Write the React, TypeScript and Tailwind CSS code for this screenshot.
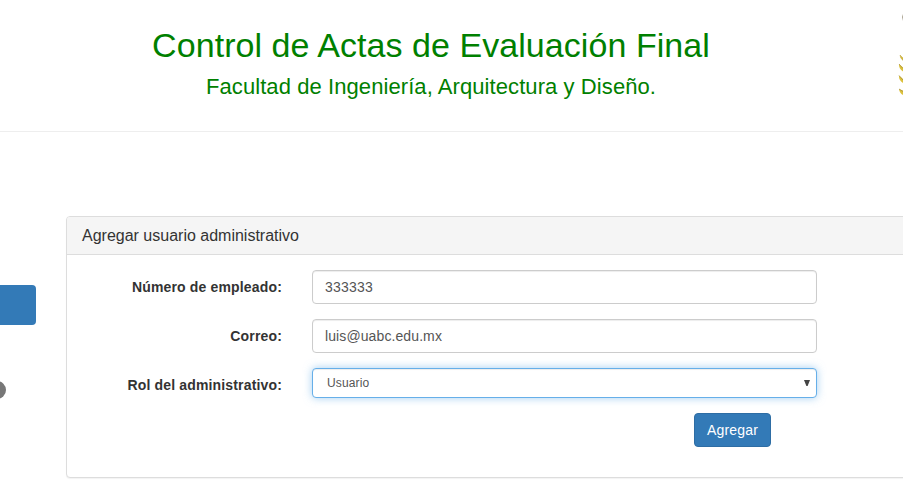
import React from 'react';

const inputBase =
  'block w-[505px] rounded-[4px] border bg-white text-[#555]';

function Field({ label, children }: { label: string; children: React.ReactNode }) {
  return (
    <div className="flex items-start">
      <label className="w-[215px] pt-[7px] text-right text-[14px] leading-[20px] font-bold text-[#333] tracking-[0.16px]">
        {label}
      </label>
      <div className="ml-[30px]">{children}</div>
    </div>
  );
}

function Crest() {
  return (
    <svg className="block h-[131px] w-[6px]" viewBox="0 0 6 131" fill="none">
      <path d="M6 14Q4.4 17 6 21Z" fill="#8a8068" />
      <path d="M3 55Q3 58 6 60.5V58Z" fill="#d8bc38" stroke="#bda33c" strokeWidth="0.5" />
      {[64, 75.5].map((y) => (
        <g key={y}>
          <path d={`M2 ${y}Q1.6 ${y + 4.5} 6 ${y + 7.5}V${y + 3.5}Z`} fill="#dcc13c" />
          <path d={`M2 ${y}L6 ${y + 4.5}`} stroke="#a48d3c" strokeWidth="0.7" />
        </g>
      ))}
      <path d="M2 89Q2.5 93 6 95V90.5Z" fill="#dcc13c" />
      <path d="M2 89L6 91.5" stroke="#a48d3c" strokeWidth="0.7" />
    </svg>
  );
}

export default function App() {
  return (
    <div className="h-[503px] w-[903px] overflow-hidden bg-white font-['Liberation_Sans',Arial,sans-serif] text-[#333]">
      <header className="flex h-[132px] border-b border-[#eee]">
        <div className="w-[897px] pr-[35px] pt-[25px] text-center text-[#008000]">
          <h1 className="whitespace-nowrap text-[34px] leading-[40px] tracking-[0.06px]">Control de Actas de Evaluación Final</h1>
          <h2 className="mt-[9px] whitespace-nowrap text-[22px] leading-[25px] tracking-[0.08px]">
            Facultad de Ingeniería, Arquitectura y Diseño.
          </h2>
        </div>
        <Crest />
      </header>

      <div className="flex">
        <aside className="w-[66px] shrink-0 pt-[153px]">
          <div className="h-[40px] w-[36px] rounded-r-[4px] bg-[#337ab7]" />
          <div className="mt-[56px] h-[18px] w-[6px] overflow-hidden">
            <div className="-ml-[18px] h-[18px] w-[24px] rounded-[10px] bg-[#777]" />
          </div>
        </aside>

        <main className="mt-[84px] h-[262px] w-[860px] shrink-0 rounded-[4px] border border-[#ddd] bg-white shadow-[0_1px_1px_rgba(0,0,0,0.05)]">
          <div className="h-[38px] rounded-t-[3px] border-b border-[#ddd] bg-[#f5f5f5] px-[15px] pt-[10px]">
            <h3 className="text-[16px] leading-[17px]">Agregar usuario administrativo</h3>
          </div>
          <form className="flex flex-col gap-[15px] pt-[15px]" onSubmit={(e) => e.preventDefault()}>
            <Field label="Número de empleado:">
              <input
                className={`${inputBase} h-[34px] border-[#ccc] px-[12px] text-[14px] tracking-[0.2px] shadow-[inset_0_1px_1px_rgba(0,0,0,0.075)]`}
                defaultValue="333333"
              />
            </Field>
            <Field label="Correo:">
              <input
                className={`${inputBase} h-[34px] border-[#ccc] px-[12px] text-[14px] tracking-[0.1px] shadow-[inset_0_1px_1px_rgba(0,0,0,0.075)]`}
                defaultValue="luis@uabc.edu.mx"
              />
            </Field>
            <Field label="Rol del administrativo:">
              <div
                className={`${inputBase} flex h-[30px] items-center justify-between rounded-[3px] border-[#66afe9] pl-[14px] pr-[6px] text-[12px] tracking-[0.15px] shadow-[inset_0_1px_1px_rgba(0,0,0,0.075),0_0_8px_rgba(102,175,233,0.6)]`}
              >
                <span>Usuario</span>
                <svg className="h-[6px] w-[6px]" viewBox="0 0 6 6">
                  <path d="M0 0H6L3.6 6H2.4Z" fill="#444" />
                </svg>
              </div>
            </Field>
            <button className="ml-[627px] h-[34px] w-[77px] rounded-[4px] border border-[#2e6da4] bg-[#337ab7] text-[14px] tracking-[0.2px] text-white">
              Agregar
            </button>
          </form>
        </main>
      </div>
    </div>
  );
}
